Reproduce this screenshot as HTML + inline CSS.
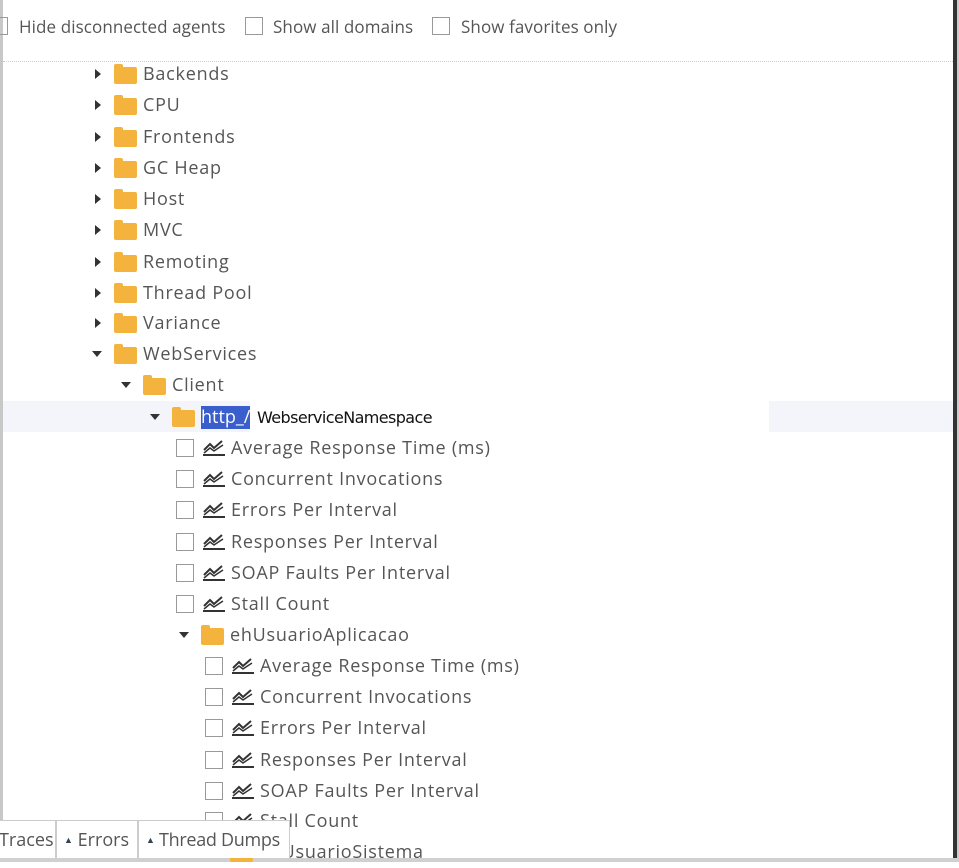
<!DOCTYPE html>
<html><head><meta charset="utf-8"><style>
*{margin:0;padding:0;box-sizing:border-box}
body{width:959px;height:862px;background:#fff;position:relative;overflow:hidden;font-family:"Open Sans","Liberation Sans",sans-serif;color:#555}
.a{position:absolute}
.row{position:absolute;height:31px;line-height:31px;font-size:18px;letter-spacing:0.75px;white-space:nowrap}
.tri{position:absolute;width:0;height:0}
.tr{border-top:5px solid transparent;border-bottom:5px solid transparent;border-left:6px solid #333}
.td{border-left:5px solid transparent;border-right:5px solid transparent;border-top:6px solid #333}
.fold{position:absolute;width:23px;height:17px;background:#f3b33d;border-radius:2px}
.fold:before{content:"";position:absolute;left:0;top:-3px;width:9px;height:4px;background:#f3b33d;border-radius:2px 2px 0 0}
.cb{position:absolute;width:18px;height:18px;border:1px solid #999;background:#fff}
.ic{position:absolute;width:24px;height:20px}
.hdr{position:absolute;top:15px;font-size:17px;color:#555;white-space:nowrap;letter-spacing:0.1px}
.tab{position:absolute;top:820px;height:38px;border:1px solid #ccc;border-bottom:none;background:#fff;font-size:18px;line-height:38px;color:#555;white-space:nowrap}
</style></head><body>
<div class="a" style="left:0;top:0;width:3px;height:862px;background:#c8c8c8"></div>
<div class="a" style="left:953px;top:0;width:4px;height:862px;background:#333"></div>
<div class="a" style="left:957px;top:0;width:2px;height:862px;background:#ccc"></div>
<div class="a" style="left:0;top:858px;width:959px;height:4px;background:#d0d0d0"></div>

<div class="a" style="left:-8px;top:17px;width:16px;height:18px;border:1px solid #999"></div>
<div class="hdr" style="left:19px">Hide disconnected agents</div>
<div class="a" style="left:245px;top:17px;width:18px;height:18px;border:1px solid #999"></div>
<div class="hdr" style="left:273px">Show all domains</div>
<div class="a" style="left:432px;top:17px;width:18px;height:18px;border:1px solid #999"></div>
<div class="hdr" style="left:461px">Show favorites only</div>
<div class="a" style="left:3px;top:61px;width:950px;border-top:1px dotted #ccc"></div>

<div class="a" style="left:3px;top:401px;width:950px;height:31px;background:#f3f5fa"></div>
<div class="a" style="left:250px;top:400px;width:519px;height:33px;background:#fff"></div>

<svg width="0" height="0" style="position:absolute"><defs>
<symbol id="ch" viewBox="0 0 24 20"><path d="M2 12 L8 6 L12 10 L20 3" fill="none" stroke="#333" stroke-width="2"/><path d="M2 15 L8 10 L12 13 L21 7" fill="none" stroke="#333" stroke-width="1.5"/><rect x="1" y="16" width="22" height="2" fill="#333"/></symbol>
</defs></svg>

<div id="tree"></div>
<script>
var rows=[
["f",0,"Backends",73,0],["f",0,"CPU",104,0],["f",0,"Frontends",136,0],["f",0,"GC Heap",167,0],["f",0,"Host",198,0],["f",0,"MVC",229,0],["f",0,"Remoting",261,0],["f",0,"Thread Pool",292,0],["f",0,"Variance",322,0],["f",0,"WebServices",353,1],["f",1,"Client",384,1],["h",2,"",416,1],
["m",2,"Average Response Time (ms)",447],["m",2,"Concurrent Invocations",478],["m",2,"Errors Per Interval",509],["m",2,"Responses Per Interval",541],["m",2,"SOAP Faults Per Interval",572],["m",2,"Stall Count",603],
["f",3,"ehUsuarioAplicacao",634,1],
["m",3,"Average Response Time (ms)",665],["m",3,"Concurrent Invocations",696],["m",3,"Errors Per Interval",727],["m",3,"Responses Per Interval",759],["m",3,"SOAP Faults Per Interval",790],["m",3,"Stall Count",820],["t",4,"ehUsuarioSistema",851,0]];
var h="";
rows.forEach(function(r){var lv=r[1],y=r[3],o=lv*29;
if(r[0]=="f"||r[0]=="h"||r[0]=="t"){
 if(r[4])h+='<div class="tri td" style="left:'+(92+o)+'px;top:'+(y-2)+'px"></div>';
 else h+='<div class="tri tr" style="left:'+(95+o)+'px;top:'+(y-4)+'px"></div>';
 h+='<div class="fold" style="left:'+(114+o)+'px;top:'+(y-6)+'px"></div>';
 if(r[0]=="h"){h+='<div class="a" style="left:201px;top:406px;width:49px;height:23px;background:#3a5fcd;color:#fff;font-size:18px;line-height:23px">http_/</div><div class="a" style="left:257px;top:407px;font-size:16px;color:#111;font-family:\'DejaVu Sans\',sans-serif;letter-spacing:-0.6px;line-height:22px">WebserviceNamespace</div>';}
 else h+='<div class="row" style="left:'+(143+o)+'px;top:'+(y-14)+'px">'+r[2]+'</div>';
}else{var b=176+(lv-2)*29;
 h+='<div class="cb" style="left:'+b+'px;top:'+(y-8)+'px"></div>';
 h+='<svg class="ic" style="left:'+(b+26)+'px;top:'+(y-9)+'px"><use href="#ch"/></svg>';
 h+='<div class="row" style="left:'+(b+55)+'px;top:'+(y-14)+'px">'+r[2]+'</div>';}
});
document.getElementById("tree").innerHTML=h;
</script>

<div class="tab" style="left:-10px;width:66px;padding-left:8px">Traces</div>
<div class="tab" style="left:56px;width:82px;padding-left:7px"><span style="font-size:9px;vertical-align:3px;color:#345">▲</span> Errors</div>
<div class="tab" style="left:138px;width:152px;padding-left:7px;letter-spacing:-0.3px"><span style="font-size:9px;vertical-align:3px;color:#345">▲</span> Thread Dumps</div>
</body></html>
